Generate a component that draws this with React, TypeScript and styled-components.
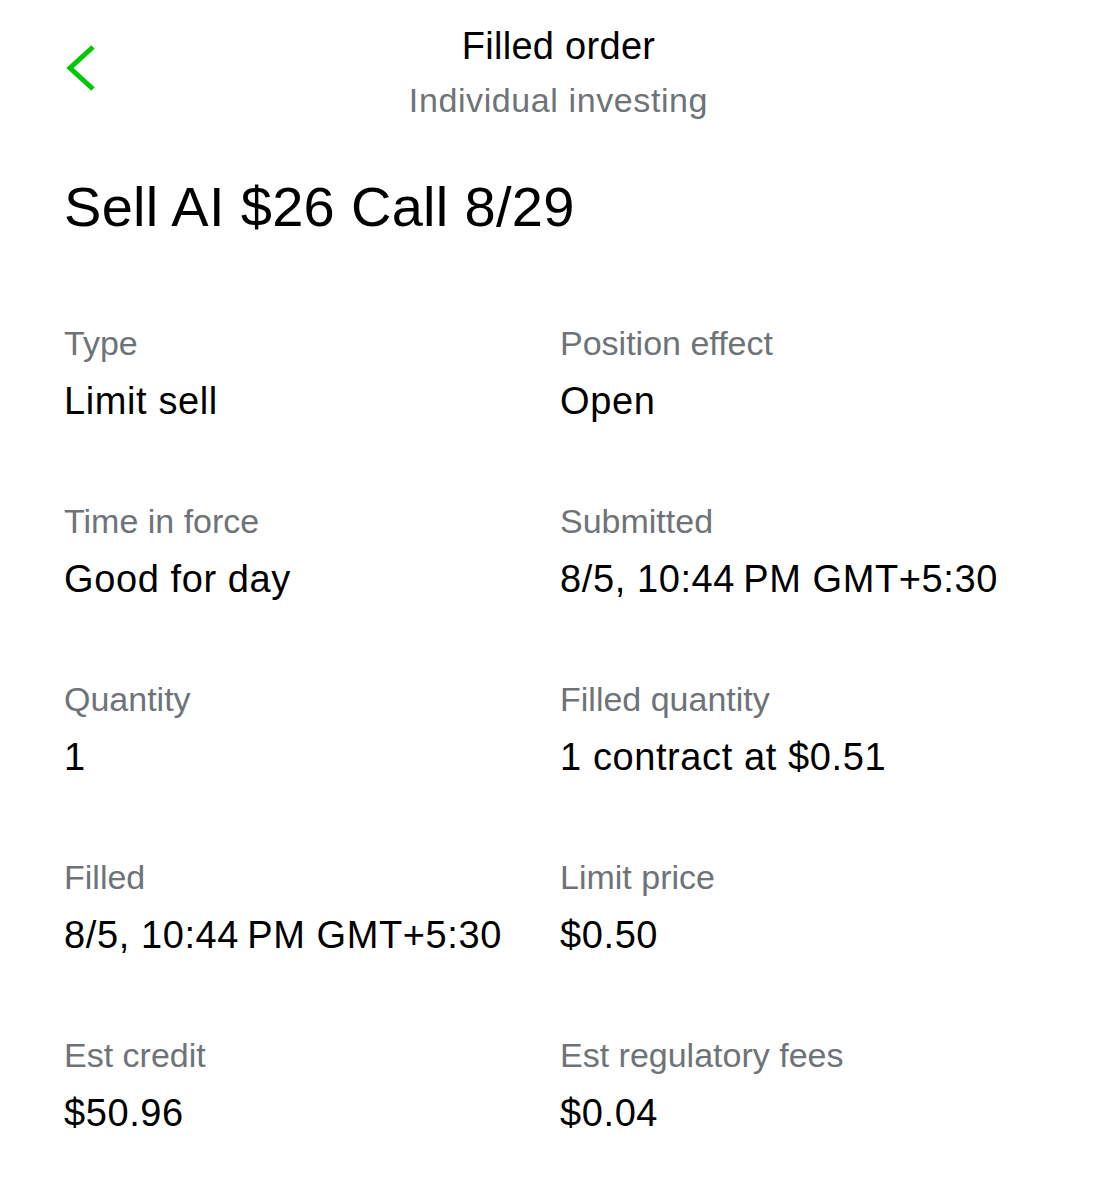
import React from "react";
import styled, {createGlobalStyle} from "styled-components";

const GlobalStyle = createGlobalStyle`
  html, body {
    margin: 0;
    padding: 0;
    background: #fff;
    font-family: "Liberation Sans", Arial, sans-serif;
    color: #000;
  }
`;

interface Field {
    label: string;
    value: string;
}

const fields: Field[] = [
    {label: "Type", value: "Limit sell"},
    {label: "Position effect", value: "Open"},
    {label: "Time in force", value: "Good for day"},
    {label: "Submitted", value: "8/5, 10:44\u2009PM GMT+5:30"},
    {label: "Quantity", value: "1"},
    {label: "Filled quantity", value: "1 contract at $0.51"},
    {label: "Filled", value: "8/5, 10:44\u2009PM GMT+5:30"},
    {label: "Limit price", value: "$0.50"},
    {label: "Est credit", value: "$50.96"},
    {label: "Est regulatory fees", value: "$0.04"},
];

const BackIcon = () => (
    <svg width="32" height="48" viewBox="0 0 32 48" fill="none">
        <path d="M29 3 L6 24 L29 45" stroke="#00c805" strokeWidth="5" strokeLinecap="butt" strokeLinejoin="miter"/>
    </svg>
);

export default function App() {
    return (
        <>
            <GlobalStyle/>
            <Page>
                <Header>
                    <BackButton aria-label="Back">
                        <BackIcon/>
                    </BackButton>
                    <HeaderText>
                        <HeaderTitle>Filled order</HeaderTitle>
                        <HeaderSubtitle>Individual investing</HeaderSubtitle>
                    </HeaderText>
                    <span/>
                </Header>
                <Content>
                    <OrderTitle>Sell AI $26 Call 8/29</OrderTitle>
                    <FieldGrid>
                        {fields.map((f) => (
                            <FieldCell key={f.label}>
                                <FieldLabel>{f.label}</FieldLabel>
                                <FieldValue>{f.value}</FieldValue>
                            </FieldCell>
                        ))}
                    </FieldGrid>
                </Content>
            </Page>
        </>
    );
}

const Page = styled.div`
  width: 1117px;
  min-height: 1200px;
  background: #fff;
`;

const Header = styled.header`
  display: grid;
  grid-template-columns: 1fr auto 1fr;
  padding-top: 24px;
`;

const BackButton = styled.button`
  justify-self: start;
  align-self: start;
  margin: 20px 0 0 64px;
  padding: 0;
  border: none;
  background: none;
  display: flex;
  cursor: pointer;
`;

const HeaderText = styled.div`
  display: flex;
  flex-direction: column;
  align-items: center;
  gap: 12px;
`;

const HeaderTitle = styled.div`
  font-size: 38px;
  line-height: 44px;
  letter-spacing: 0.3px;
  color: #000;
`;

const HeaderSubtitle = styled.div`
  font-size: 34px;
  line-height: 40px;
  color: #6e7378;
  letter-spacing: 0.6px;
`;

const Content = styled.main`
  padding: 55px 0 0 64px;
`;

const OrderTitle = styled.h1`
  margin: 0;
  font-size: 56px;
  line-height: 64px;
  font-weight: 400;
  letter-spacing: 0.3px;
`;

const FieldGrid = styled.div`
  display: grid;
  grid-template-columns: 496px 1fr;
  row-gap: 80px;
  margin-top: 86px;
`;

const FieldCell = styled.div`
  display: flex;
  flex-direction: column;
  gap: 18px;
`;

const FieldLabel = styled.div`
  font-size: 34px;
  line-height: 36px;
  color: #6e7378;
`;

const FieldValue = styled.div`
  font-size: 38px;
  line-height: 44px;
  letter-spacing: 0.6px;
  color: #000;
  white-space: nowrap;
`;
